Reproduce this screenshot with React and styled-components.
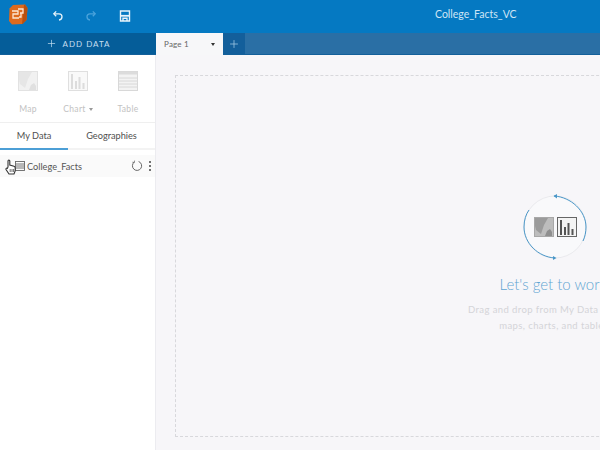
import React from 'react';
import styled, { createGlobalStyle } from 'styled-components';
import { Plus } from 'lucide-react';

const Global = createGlobalStyle`
  html, body { margin: 0; padding: 0; height: 100%; overflow: hidden; }
  body { font-family: Lato, "Open Sans", sans-serif; background: #fff; }
`;

const Page = styled.div`
  width: 600px;
  height: 450px;
  display: flex;
  flex-direction: column;
  overflow: hidden;
`;

const TopBar = styled.header`
  height: 33px;
  flex: none;
  display: flex;
  align-items: flex-start;
  background: #0579c2;
  position: relative;
`;

const Logo = styled.div`
  width: 20px;
  height: 21px;
  margin: 4px 0 0 8px;
`;

const ToolIcon = styled.div`
  width: 14px;
  height: 14px;
  margin: 7px 0 0 ${p => p.$gap}px;
  color: ${p => (p.$dim ? '#4ba3dc' : '#e8f3fa')};
`;

const FileTitle = styled.div`
  position: absolute;
  left: 435px;
  top: 8px;
  font-size: 10.5px;
  color: #cfe5f5;
`;

const TabRow = styled.div`
  height: 22px;
  flex: none;
  display: flex;
  background: #2a6fa5;
  border-bottom: 1px solid #13609a;
  box-sizing: border-box;
`;

const AddData = styled.div`
  width: 156px;
  display: flex;
  align-items: center;
  justify-content: center;
  gap: 6px;
  background: #055d99;
  color: #c5dff0;
  font-size: 8px;
  letter-spacing: 1px;
`;

const PageTab = styled.div`
  width: 67px;
  height: 22px;
  box-sizing: border-box;
  padding: 0 8px;
  display: flex;
  align-items: center;
  justify-content: space-between;
  background: #f7f7f9;
  font-size: 8px;
  letter-spacing: 0.2px;
  color: #666;
`;

const Caret = styled.span`
  width: 0;
  height: 0;
  border-left: 2.5px solid transparent;
  border-right: 2.5px solid transparent;
  border-top: 3px solid ${p => p.$color || '#333'};
`;

const AddTab = styled.div`
  width: 22px;
  display: flex;
  align-items: center;
  justify-content: center;
  background: #135f9b;
  color: #a5cbe6;
`;

const Body = styled.div`
  flex: 1;
  display: flex;
  min-height: 0;
`;

const Sidebar = styled.aside`
  width: 156px;
  flex: none;
  background: #fff;
  border-right: 1px solid #ececf0;
  box-sizing: border-box;
`;

const Viz = styled.div`
  height: 68px;
  padding: 16px 3px 0;
  box-sizing: border-box;
  display: grid;
  grid-template-columns: repeat(3, 50px);
  border-bottom: 1px solid #efefef;
`;

const VizItem = styled.div`
  display: flex;
  flex-direction: column;
  align-items: center;
  gap: 13px;
  font-size: 8.5px;
  letter-spacing: 0.3px;
  color: #c2c2c2;
`;

const VizLabel = styled.div`
  display: flex;
  align-items: center;
  gap: 3px;
`;

const Tabs = styled.div`
  height: 27px;
  display: flex;
`;

const TabItem = styled.div`
  width: ${p => p.$w}px;
  display: flex;
  align-items: center;
  justify-content: center;
  font-size: 9.2px;
  color: #4f4f4f;
  box-sizing: border-box;
  border-bottom: 2px solid ${p => (p.$active ? '#4c9fd6' : '#f3f3f3')};
`;

const DataRow = styled.div`
  margin-top: 5px;
  height: 22px;
  display: flex;
  align-items: center;
  padding: 0 3px 0 15px;
  background: #fafafa;
  font-size: 9.2px;
  color: #555;
  position: relative;
`;

const RowName = styled.span`
  margin-left: 2px;
  flex: 1;
`;

const RowAction = styled.div`
  display: flex;
  margin-left: ${p => p.$gap}px;
`;

const Cursor = styled.div`
  position: absolute;
  left: 5px;
  top: 4px;
  width: 11px;
  height: 16px;
`;

const Canvas = styled.main`
  flex: 1;
  min-width: 0;
  background: #f7f6f9;
  padding: 20px 0 13px 19px;
  box-sizing: border-box;
  overflow: hidden;
`;

const DropZone = styled.div`
  width: 760px;
  height: 100%;
  box-sizing: border-box;
  border: 1px dashed #d8d8dc;
  display: flex;
  flex-direction: column;
  align-items: center;
  padding-top: 118px;
`;

const Illustration = styled.div`
  position: relative;
  width: 64px;
  height: 66px;
`;

const IllustrationIcons = styled.div`
  position: absolute;
  left: 11px;
  top: 23px;
  display: flex;
  gap: 3px;
`;

const Heading = styled.div`
  margin-top: 15px;
  font-size: 15px;
  font-weight: 300;
  color: #5fa5d2;
  white-space: nowrap;
`;

const Hint = styled.div`
  margin-top: 9px;
  font-size: 9.5px;
  font-weight: 400;
  line-height: 16px;
  letter-spacing: 0.4px;
  color: #d4d4d8;
  text-align: center;
  white-space: nowrap;
`;

function LogoMark() {
  return (
    <svg viewBox="0 0 20 21" width="20" height="21">
      <path d="M5 1 L17 0.5 L19.5 4 L18.5 16 L14.5 20 L4 20.5 L1 17 L1.5 4.5 Z" fill="#dd6a1e" />
      <path d="M16 1 L17 0.5 L19.5 4 L18.5 16 L14.5 20 L14 20 Z" fill="#b8500f" />
      <path d="M4 7 H10 V10 H5 V14 H11 M10 5 H15 V9 H12 M13 9 V13 H11" fill="none" stroke="#fde7d4" strokeWidth="1.3" />
    </svg>
  );
}

function Undo() {
  return (
    <svg viewBox="0 0 14 14" width="14" height="14" fill="none" stroke="currentColor" strokeWidth="1.3">
      <path d="M5.2 2.4 L2.8 4.8 L5.2 7.2" />
      <path d="M3 4.8 H8 C10 4.8 11 6.2 11 7.8 C11 9.5 9.8 10.8 8 11" />
    </svg>
  );
}

function Redo() {
  return (
    <svg viewBox="0 0 14 14" width="14" height="14" fill="none" stroke="currentColor" strokeWidth="1.3">
      <path d="M8.8 2.4 L11.2 4.8 L8.8 7.2" />
      <path d="M11 4.8 H6 C4 4.8 3 6.2 3 7.8 C3 9.5 4.2 10.8 6 11" />
    </svg>
  );
}

function Save() {
  return (
    <svg viewBox="0 0 14 14" width="14" height="14" fill="none" stroke="currentColor" strokeWidth="1.4">
      <path d="M2.5 2 H11.5 V12 H2.5 Z" />
      <path d="M2.5 6.8 H11.5" strokeWidth="1.8" />
      <path d="M5 12 V9.2 H9 V12" />
    </svg>
  );
}

function MapIcon({ fade = false }) {
  return (
    <svg viewBox="0 0 20 20" width="20" height="20">
      <rect x="0.5" y="0.5" width="19" height="19" fill={fade ? '#f1f1f1' : '#bdbdbd'} stroke={fade ? '#e2e2e2' : '#a8a8a8'} />
      <path d="M1 1 H14 L10 8 L7 17 L2 13 L1 9 Z" fill={fade ? '#e6e6e6' : '#9b9b9b'} />
      <path d="M13 14 L16 12 L18 15 V19 H11 Z" fill={fade ? '#e0e0e0' : '#8f8f8f'} />
    </svg>
  );
}

function ChartIcon({ fade = false }) {
  const c = fade ? '#dcdcdc' : '#555';
  return (
    <svg viewBox="0 0 20 20" width="20" height="20">
      <rect x="0.5" y="0.5" width="19" height="19" fill={fade ? '#f9f9f9' : '#f4f4f4'} stroke={fade ? '#dfdfdf' : '#666'} />
      <path d="M3 3 V18 H5 V3 Z M7 10 V18 H9 V10 Z M10.5 6 V18 H12.5 V6 Z M14.5 12 V18 H16.5 V12 Z" fill={c} />
    </svg>
  );
}

function TableIcon() {
  return (
    <svg viewBox="0 0 20 20" width="20" height="20" fill="none">
      <rect x="0.5" y="0.5" width="19" height="19" fill="#f3f3f3" stroke="#d8d8d8" />
      <rect x="0.5" y="0.5" width="19" height="3" fill="#dcdcdc" />
      <path d="M1 7 H19 M1 10 H19 M1 13 H19 M1 16 H19" stroke="#d8d8d8" />
    </svg>
  );
}

function Dataset() {
  return (
    <svg viewBox="0 0 10 10" width="10" height="10" fill="none" stroke="#666" strokeWidth="0.9">
      <rect x="0.5" y="0.5" width="9" height="9" />
      <path d="M0.5 3 H9.5 M0.5 5 H9.5 M0.5 7 H9.5" />
    </svg>
  );
}

function Refresh() {
  return (
    <svg viewBox="0 0 12 12" width="12" height="12" fill="none" stroke="#666" strokeWidth="1">
      <path d="M7.6 1.5 A4.6 4.6 0 1 1 3.2 2.2" />
      <path d="M3.6 0.6 L3.2 2.6 L1.4 2.2" strokeWidth="0.8" />
    </svg>
  );
}

function Dots() {
  return (
    <svg viewBox="0 0 4 12" width="4" height="12" fill="#444">
      <circle cx="2" cy="2" r="1" />
      <circle cx="2" cy="6" r="1" />
      <circle cx="2" cy="10" r="1" />
    </svg>
  );
}

function HandCursor() {
  return (
    <svg viewBox="0 0 11 16" width="11" height="16">
      <path d="M3 8 V2 C3 0.7 4.8 0.7 4.8 2 V6 L9 7.2 C10 7.5 10.2 8 10.2 9 V12 L9 15 H4 L1 10.5 C0.6 9.6 1.6 8.8 2.4 9.4 Z" fill="#fff" stroke="#333" strokeWidth="1.1" />
      <path d="M5.2 10 V13 M7 10 V13 M8.6 10 V13" stroke="#333" strokeWidth="0.7" />
    </svg>
  );
}

function Cycle() {
  return (
    <svg viewBox="0 0 64 66" width="64" height="66" fill="none">
      <circle cx="32" cy="33" r="31" fill="#f9f9fb" stroke="#e6e6ea" strokeWidth="0.8" />
      <path d="M31 2 C 48 3 63 17 63 33 C 63 38 62 43 60 47" stroke="#4a97c8" strokeWidth="1" />
      <path d="M34 0 L30.5 2 L34 4.5 Z" fill="#4a97c8" />
      <path d="M32 64 C 15 63 1 49 1 33 C 1 26 3 20 6 16" stroke="#4a97c8" strokeWidth="1" />
      <path d="M30 62 L33.5 64 L30 66 Z" fill="#4a97c8" />
    </svg>
  );
}

export default function App() {
  return (
    <Page>
      <Global />
      <TopBar>
        <Logo><LogoMark /></Logo>
        <ToolIcon $gap={23}><Undo /></ToolIcon>
        <ToolIcon $gap={19} $dim><Redo /></ToolIcon>
        <ToolIcon $gap={20}><Save /></ToolIcon>
        <FileTitle>College_Facts_VC</FileTitle>
      </TopBar>
      <TabRow>
        <AddData><Plus size={11} strokeWidth={1.5} />ADD DATA</AddData>
        <PageTab>Page 1<Caret /></PageTab>
        <AddTab><Plus size={12} strokeWidth={1.5} /></AddTab>
      </TabRow>
      <Body>
        <Sidebar>
          <Viz>
            <VizItem><MapIcon fade />Map</VizItem>
            <VizItem><ChartIcon fade /><VizLabel>Chart <Caret $color="#999" /></VizLabel></VizItem>
            <VizItem><TableIcon />Table</VizItem>
          </Viz>
          <Tabs>
            <TabItem $w={68} $active>My Data</TabItem>
            <TabItem $w={87}>Geographies</TabItem>
          </Tabs>
          <DataRow>
            <Cursor><HandCursor /></Cursor>
            <Dataset />
            <RowName>College_Facts</RowName>
            <RowAction $gap={0}><Refresh /></RowAction>
            <RowAction $gap={5}><Dots /></RowAction>
          </DataRow>
        </Sidebar>
        <Canvas>
          <DropZone>
            <Illustration>
              <Cycle />
              <IllustrationIcons>
                <MapIcon />
                <ChartIcon />
              </IllustrationIcons>
            </Illustration>
            <Heading>Let's get to work!</Heading>
            <Hint>
              Drag and drop from My Data to create<br />
              maps, charts, and tables.
            </Hint>
          </DropZone>
        </Canvas>
      </Body>
    </Page>
  );
}
